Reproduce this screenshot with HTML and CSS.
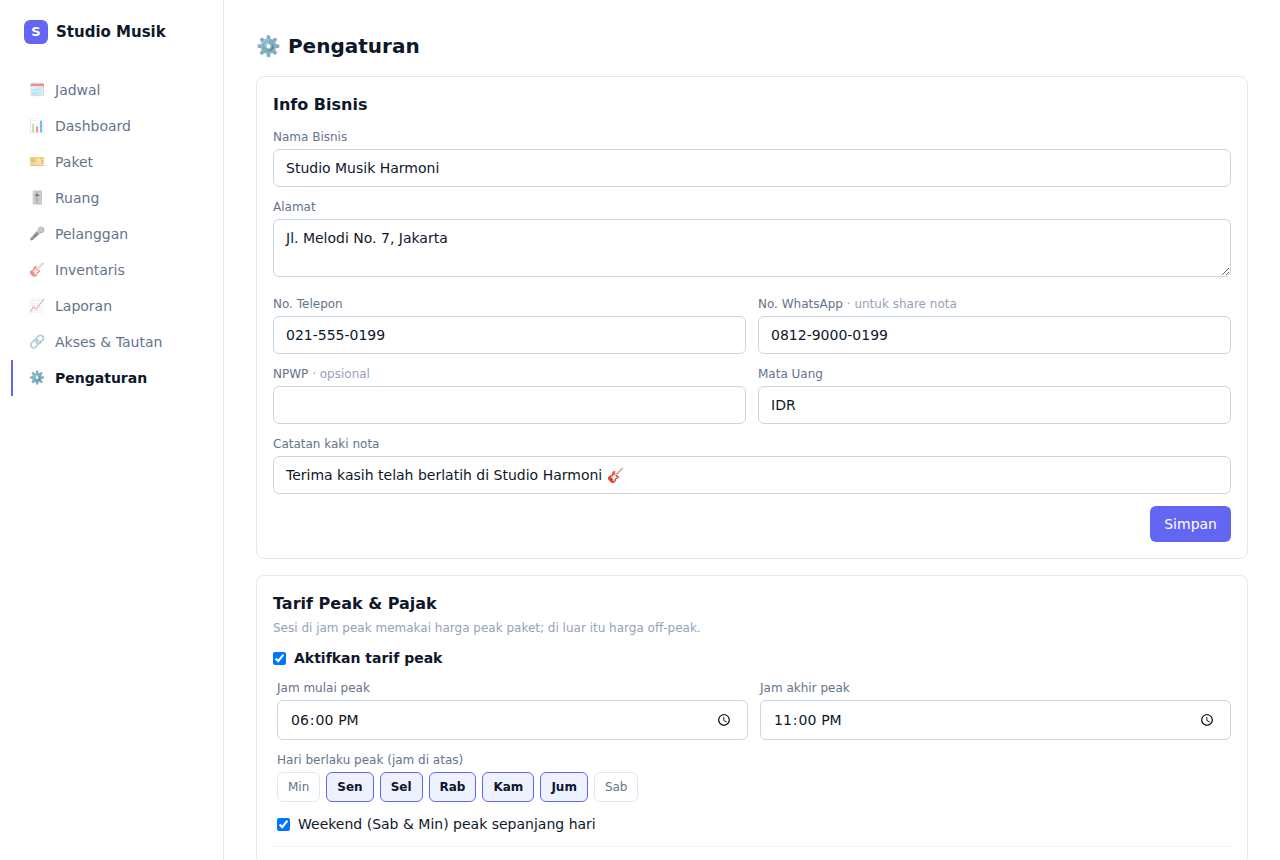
FILE: index.html
```html
<!DOCTYPE html>
<html lang="id">
<head>
    <meta charset="UTF-8">
    <meta name="viewport" content="width=device-width, initial-scale=1.0">
    <title>Pengaturan</title>
    <link rel="stylesheet" href="styles.css">
</head>
<body>
    <div class="layout">
        <aside class="sidebar">
            <div class="brand">
                <span class="brand-logo">S</span>
                <span class="brand-name">Studio Musik</span>
            </div>
            <nav class="nav">
                <a href="#" class="nav-link"><span class="nav-icon">🗓️</span>Jadwal</a>
                <a href="#" class="nav-link"><span class="nav-icon">📊</span>Dashboard</a>
                <a href="#" class="nav-link"><span class="nav-icon">🎫</span>Paket</a>
                <a href="#" class="nav-link"><span class="nav-icon">🎚️</span>Ruang</a>
                <a href="#" class="nav-link"><span class="nav-icon">🎤</span>Pelanggan</a>
                <a href="#" class="nav-link"><span class="nav-icon">🎸</span>Inventaris</a>
                <a href="#" class="nav-link"><span class="nav-icon">📈</span>Laporan</a>
                <a href="#" class="nav-link"><span class="nav-icon">🔗</span>Akses &amp; Tautan</a>
                <a href="#" class="nav-link active"><span class="nav-icon">⚙️</span>Pengaturan</a>
            </nav>
        </aside>

        <main class="content">
            <h1>⚙️ Pengaturan</h1>

            <form class="card">
                <h2>Info Bisnis</h2>
                <div class="fields">
                    <div class="field wide">
                        <label for="nama">Nama Bisnis</label>
                        <input type="text" id="nama" class="control" value="Studio Musik Harmoni">
                    </div>
                    <div class="field wide">
                        <label for="alamat">Alamat</label>
                        <textarea id="alamat" class="control" rows="2">Jl. Melodi No. 7, Jakarta</textarea>
                    </div>
                    <div class="field">
                        <label for="telepon">No. Telepon</label>
                        <input type="text" id="telepon" class="control" value="021-555-0199">
                    </div>
                    <div class="field">
                        <label for="whatsapp">No. WhatsApp <span class="hint">· untuk share nota</span></label>
                        <input type="text" id="whatsapp" class="control" value="0812-9000-0199">
                    </div>
                    <div class="field">
                        <label for="npwp">NPWP <span class="hint">· opsional</span></label>
                        <input type="text" id="npwp" class="control">
                    </div>
                    <div class="field">
                        <label for="mata-uang">Mata Uang</label>
                        <input type="text" id="mata-uang" class="control" value="IDR">
                    </div>
                    <div class="field wide">
                        <label for="catatan">Catatan kaki nota</label>
                        <input type="text" id="catatan" class="control" value="Terima kasih telah berlatih di Studio Harmoni 🎸">
                    </div>
                </div>
                <div class="actions">
                    <button type="submit" class="save-button">Simpan</button>
                </div>
            </form>

            <form class="card">
                <h2>Tarif Peak &amp; Pajak</h2>
                <p class="description">Sesi di jam peak memakai harga peak paket; di luar itu harga off-peak.</p>
                <label class="check strong"><input type="checkbox" checked>Aktifkan tarif peak</label>

                <div class="peak">
                    <div class="fields">
                        <div class="field">
                            <label for="jam-mulai">Jam mulai peak</label>
                            <input type="time" id="jam-mulai" class="control" value="18:00">
                        </div>
                        <div class="field">
                            <label for="jam-akhir">Jam akhir peak</label>
                            <input type="time" id="jam-akhir" class="control" value="23:00">
                        </div>
                    </div>
                    <div class="field" role="group" aria-labelledby="hari-label">
                        <span class="label" id="hari-label">Hari berlaku peak (jam di atas)</span>
                        <div class="days">
                            <button type="button" class="day">Min</button>
                            <button type="button" class="day selected">Sen</button>
                            <button type="button" class="day selected">Sel</button>
                            <button type="button" class="day selected">Rab</button>
                            <button type="button" class="day selected">Kam</button>
                            <button type="button" class="day selected">Jum</button>
                            <button type="button" class="day">Sab</button>
                        </div>
                    </div>
                    <label class="check"><input type="checkbox" checked>Weekend (Sab &amp; Min) peak sepanjang hari</label>
                </div>
                <div class="divider"></div>
            </form>
        </main>
    </div>

    <script>
        document.querySelectorAll('.day').forEach((day) => {
            day.addEventListener('click', () => day.classList.toggle('selected'));
        });
    </script>
</body>
</html>
```

FILE: styles.css
```css
* {
    margin: 0;
    padding: 0;
    box-sizing: border-box;
}

body {
    font-family: "DejaVu Sans", sans-serif;
    font-size: 14px;
    line-height: 20px;
    color: #0f172a;
    background: #fff;
}

input,
textarea,
button {
    font: inherit;
    color: inherit;
}

.layout {
    display: flex;
    min-height: 100vh;
}

/* Sidebar */
.sidebar {
    flex: none;
    width: 224px;
    border-right: 1px solid #e2e8f0;
}

.brand {
    display: flex;
    align-items: center;
    gap: 8px;
    padding: 20px 24px;
}

.brand-logo {
    display: flex;
    align-items: center;
    justify-content: center;
    width: 24px;
    height: 24px;
    border-radius: 6px;
    background: #6366f1;
    color: #fff;
    font-size: 13px;
    font-weight: bold;
}

.brand-name {
    font-size: 15px;
    font-weight: bold;
}

.nav {
    padding: 8px 11px;
}

.nav-link {
    display: flex;
    align-items: center;
    gap: 10px;
    padding: 8px 16px;
    border-left: 2px solid transparent;
    color: #64748b;
    text-decoration: none;
}

.nav-icon {
    display: flex;
    justify-content: center;
    width: 16px;
    font-size: 13px;
    opacity: 0.6;
}

.nav-link:hover,
.nav-link.active {
    color: #0f172a;
}

.nav-link.active {
    border-left-color: #6366f1;
    font-weight: bold;
}

.nav-link.active .nav-icon {
    opacity: 1;
}

/* Content */
.content {
    flex: 1;
    min-width: 0;
    padding: 32px;
}

h1 {
    margin-bottom: 16px;
    font-size: 20px;
    line-height: 28px;
}

h2 {
    font-size: 16px;
    line-height: 24px;
}

.card {
    display: flex;
    flex-direction: column;
    gap: 12px;
    margin-bottom: 16px;
    padding: 16px;
    border: 1px solid #e2e8f0;
    border-radius: 8px;
}

.fields {
    display: grid;
    grid-template-columns: 1fr 1fr;
    gap: 12px;
}

.field {
    font-size: 16px;
    line-height: 24px;
}

.wide {
    grid-column: 1 / -1;
}

.field label,
.label {
    display: block;
    margin-bottom: 4px;
    font-size: 12px;
    line-height: 16px;
    color: #64748b;
}

.field .hint {
    color: #94a3b8;
}

.control {
    width: 100%;
    padding: 8px 12px;
    border: 1px solid #cbd5e1;
    border-radius: 6px;
    background: #fff;
    font-size: 14px;
    line-height: 20px;
}

input.control {
    display: block;
}

.control:focus {
    outline: none;
    border-color: #6366f1;
}

.actions {
    display: flex;
    justify-content: flex-end;
}

.save-button {
    padding: 8px 14px;
    border: none;
    border-radius: 6px;
    background: #6366f1;
    color: #fff;
    cursor: pointer;
}

.description {
    margin-top: -8px;
    font-size: 12px;
    line-height: 16px;
    color: #94a3b8;
}

.check {
    display: flex;
    align-items: center;
    gap: 8px;
}

.strong {
    font-weight: bold;
}

.peak {
    display: flex;
    flex-direction: column;
    gap: 12px;
    padding-left: 4px;
}

.days {
    display: flex;
    flex-wrap: wrap;
    gap: 6px;
}

.day {
    padding: 6px 10px;
    border: 1px solid #e2e8f0;
    border-radius: 6px;
    background: #fff;
    color: #64748b;
    font-size: 12px;
    line-height: 16px;
    cursor: pointer;
}

.day.selected {
    border-color: #6366f1;
    background: #eef2ff;
    color: #0f172a;
    font-weight: bold;
}

.divider {
    border-top: 1px solid #f1f5f9;
}
```
